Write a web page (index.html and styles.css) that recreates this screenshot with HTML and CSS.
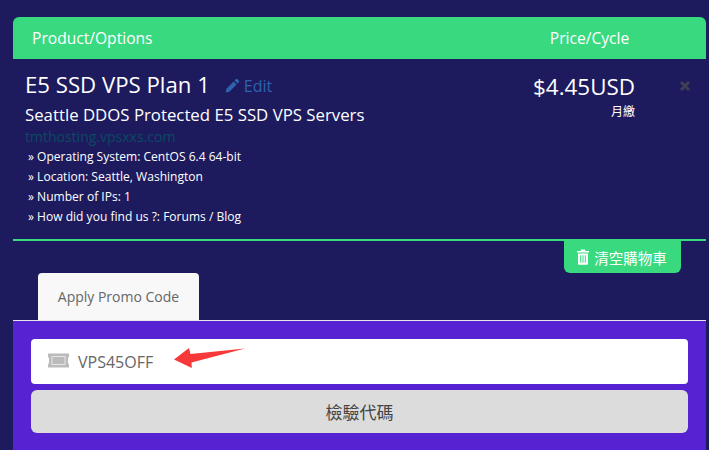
FILE: index.html
```html
<!DOCTYPE html>
<html lang="zh-TW">
<head>
<meta charset="utf-8">
<title>Cart</title>
<link rel="stylesheet" href="styles.css">
</head>
<body>
<main class="cart">
  <div class="head">
    <div class="head-product">Product/Options</div>
    <div class="head-price">Price/Cycle</div>
  </div>
  <div class="item">
    <div class="item-info">
      <div class="item-title">
        <span class="item-name">E5 SSD VPS Plan 1</span>
        <a class="edit">
          <svg class="edit-icon" viewBox="0 0 16 16"><path d="M11.6 1.2c.5-.5 1.2-.5 1.7 0l1.500 1.500c.5.5.5 1.200 0 1.700l-1.500 1.500-3.200-3.200zM9.200 3.600l3.200 3.200-7.800 7.800-3.900.9.8-4z" fill="currentColor"/></svg>
          Edit
        </a>
      </div>
      <div class="item-group">Seattle DDOS Protected E5 SSD VPS Servers</div>
      <div class="item-watermark">tmthosting.vpsxxs.com</div>
      <ul class="item-options">
        <li>» Operating System: CentOS 6.4 64-bit</li>
        <li>» Location: Seattle, Washington</li>
        <li>» Number of IPs: 1</li>
        <li>» How did you find us ?: Forums / Blog</li>
      </ul>
    </div>
    <div class="item-price">
      <div class="price">$4.45USD</div>
      <div class="cycle">月繳</div>
    </div>
    <div class="item-remove">
      <svg class="remove-icon" viewBox="0 0 12 12"><path d="M2 2l8 8M10 2l-8 8" stroke="currentColor" stroke-width="3"/></svg>
    </div>
  </div>
  <div class="actions">
    <button class="empty">
      <svg class="trash" viewBox="0 0 14 16"><path d="M1 2h12v1.600H1zM4.800 .6h4.400v1.600H4.800z" fill="currentColor"/><path fill-rule="evenodd" d="M2 4.400h10V14.500c0 .8-.6 1.300-1.300 1.300H3.300C2.600 15.800 2 15.300 2 14.500zM4.200 6.200v7.600h1V6.200zM6.500 6.200v7.600h1V6.200zM8.800 6.200v7.600h1V6.200z" fill="currentColor"/></svg>
      清空購物車
    </button>
  </div>
  <div class="tabs">
    <div class="tab">Apply Promo Code</div>
  </div>
  <div class="promo">
    <div class="promo-field">
      <svg class="ticket" viewBox="0 0 21 15"><path d="M0 .5h21v3.500c-1 .3-1 1.300-1 3.500s0 3.200 1 3.500v3.500H0v-3.500c1-.3 1-1.300 1-3.500s0-3.200-1-3.500z" fill="currentColor"/><rect x="3.500" y="3" width="14" height="9" fill="#e6e6e6"/><rect x="4.500" y="4" width="12" height="7" fill="currentColor"/></svg>
      <span class="promo-code">VPS45OFF</span>
      <svg class="arrow" viewBox="0 0 72 20"><path d="M0 11.500L15 0l1.500 6L71 .500 17.500 14.500 17.800 20z" fill="#f8393a"/></svg>
    </div>
    <button class="validate">檢驗代碼</button>
  </div>
</main>
</body>
</html>
```

FILE: styles.css
```css
* { box-sizing: border-box; }
html, body { height: 100%; }
body {
  margin: 0;
  background: #1d1b5e;
  overflow: hidden;
  font-family: "Open Sans", "Noto Sans CJK TC", sans-serif;
  color: #fff;
}
.cart {
  margin: 17px 3px 0 13px;
  height: 433px;
  display: flex;
  flex-direction: column;
}
.head {
  height: 42px;
  flex: none;
  display: flex;
  align-items: center;
  background: #39d97f;
  border-radius: 6px 6px 0 0;
  font-size: 15.600px;
}
.head-product { padding-left: 19px; width: 518px; }
.head-price { width: 117px; text-align: center; }

.item {
  height: 182px;
  flex: none;
  display: flex;
  border-bottom: 2px solid #39d97f;
  padding: 12px 0 0 12px;
}
.item-info { width: 480px; }
.item-title { display: flex; align-items: baseline; height: 32px; margin-top: -2px; }
.item-name { font-size: 22.200px; line-height: 32px; }
.edit {
  margin-left: 15px;
  display: flex;
  align-items: center;
  gap: 4px;
  font-size: 16px;
  color: #2f63ad;
}
.edit-icon { width: 15px; height: 15px; }
.item-group { font-size: 16.800px; line-height: 22px; height: 22px; margin-top: 3px; white-space: nowrap; }
.item-watermark { font-size: 14px; line-height: 20px; height: 20px; color: #0b4a63; margin-top: 1px; white-space: nowrap; }
.item-options {
  list-style: none;
  margin: 0;
  padding: 0 0 0 3px;
  font-size: 12.050px;
  line-height: 20px;
}
.item-price { width: 164px; padding-right: 34px; text-align: right; }
.price { font-size: 22.400px; line-height: 32px; }
.cycle { font-size: 12px; line-height: 16px; margin-top: 1px; }
.item-remove { padding-top: 9px; margin-left: 10px; }
.remove-icon { display: block; width: 12px; height: 12px; color: #3f3e52; }

.actions { height: 32px; flex: none; padding-left: 551px; }
.empty {
  width: 117px;
  height: 32px;
  border: 0;
  padding: 0 2px 0 0;
  border-radius: 0 0 6px 6px;
  background: #39d97f;
  color: #fff;
  font-family: "Noto Sans CJK TC", sans-serif;
  font-size: 14.500px;
  display: flex;
  align-items: center;
  justify-content: center;
  gap: 4px;
}
.trash { width: 14px; height: 16px; }

.tabs {
  height: 48px;
  flex: none;
  padding-left: 25px;
  border-bottom: 1px solid #e4e4ea;
}
.tab {
  width: 161px;
  height: 47px;
  background: #f8f8f8;
  border-radius: 4px 4px 0 0;
  color: #666;
  font-size: 14px;
  display: flex;
  align-items: center;
  justify-content: center;
}

.promo {
  flex: 1;
  background: #5722d1;
  padding: 18px 18px 0;
  display: flex;
  flex-direction: column;
  gap: 6px;
}
.promo-field {
  position: relative;
  height: 45px;
  flex: none;
  background: #fff;
  border-radius: 4px;
  display: flex;
  align-items: center;
  padding-left: 17px;
  gap: 9px;
}
.ticket { width: 21px; height: 15px; color: #bbb; margin-top: -2px; }
.promo-code { font-size: 16px; color: #666; }
.arrow { position: absolute; left: 143px; top: 9px; width: 72px; height: 20px; }
.validate {
  height: 43px;
  flex: none;
  border: 0;
  border-radius: 6px;
  background: #dcdcdc;
  color: #444;
  font-family: "Noto Sans CJK TC", sans-serif;
  font-size: 17px;
}
```
